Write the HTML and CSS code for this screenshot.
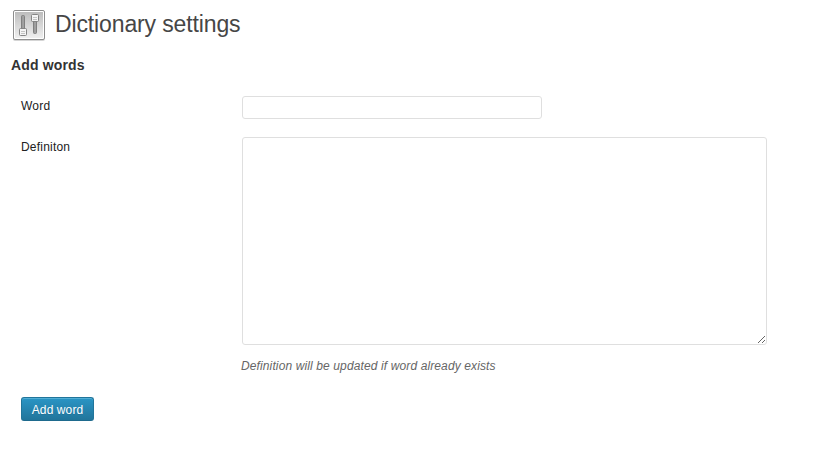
FILE: index.html
```html
<!DOCTYPE html>
<html lang="en">
<head>
<meta charset="utf-8">
<title>Dictionary settings</title>
<link rel="stylesheet" href="styles.css">
</head>
<body>
<main class="wrap">
  <header class="page-head">
    <svg class="icon" width="34" height="34" viewBox="0 0 34 34" aria-hidden="true">
      <defs>
        <linearGradient id="panel" x1="0" y1="0" x2="0" y2="1"><stop offset="0" stop-color="#bdbdbd"/><stop offset="1" stop-color="#efefef"/></linearGradient>
        <linearGradient id="track" x1="0" y1="0" x2="1" y2="0"><stop offset="0" stop-color="#858585"/><stop offset=".5" stop-color="#aaa"/><stop offset="1" stop-color="#909090"/></linearGradient>
      </defs>
      <rect x="1" y="2" width="32" height="30" rx="2" fill="#d5d5d5"/>
      <rect x="1.500" y="1.500" width="31" height="29" rx="1.500" fill="#fff" stroke="#8e8e8e"/>
      <rect x="3" y="3" width="28" height="26" fill="url(#panel)"/>
      <rect x="9.500" y="6.500" width="3" height="14" rx="1" fill="url(#track)" stroke="#808080"/>
      <rect x="21.500" y="10.500" width="3" height="14" rx="1" fill="url(#track)" stroke="#808080"/>
      <rect x="7.500" y="19.500" width="7" height="7" rx="1" fill="#f4f4f4" stroke="#858585"/>
      <path d="M9 22.500h4M9 24.500h4" stroke="#c4c4c4"/>
      <rect x="19.500" y="5.500" width="7" height="7" rx="1" fill="#f4f4f4" stroke="#858585"/>
      <path d="M21 8.500h4M21 10.500h4" stroke="#c4c4c4"/>
    </svg>
    <h1>Dictionary settings</h1>
  </header>
  <h2>Add words</h2>
  <form>
    <div class="field">
      <label for="word">Word</label>
      <input class="word" id="word" type="text">
    </div>
    <div class="field">
      <label for="definition">Definiton</label>
      <div class="control">
        <textarea id="definition"></textarea>
        <p class="hint">Definition will be updated if word already exists</p>
      </div>
    </div>
    <button class="submit" type="button">Add word</button>
  </form>
</main>
</body>
</html>
```
FILE: styles.css
```css
* { box-sizing: border-box; }
body { margin: 0; background: #fff; color: #222; font: 12px/18px "Liberation Sans", Arial, sans-serif; }
.wrap { padding: 8px 0 0 11px; }
.page-head { display: flex; height: 34px; }
.icon { display: block; flex: none; margin: 1px 9px 0 1px; }
h1 { margin: 0; font-size: 23px; line-height: 32px; font-weight: 400; color: #464646; letter-spacing: -.13px; white-space: nowrap; }
h2 { margin: 14px 0 0; font-size: 14px; line-height: 18px; font-weight: 700; color: #333; letter-spacing: .15px; }
form { padding-left: 10px; margin-top: 22px; }
.field { display: grid; grid-template-columns: 221px 525px; align-items: start; margin-bottom: 18px; }
label { padding-top: 1px; letter-spacing: .2px; }
.word, textarea { display: block; margin: 0; border: 1px solid #dfdfdf; border-radius: 3px; background: #fff; outline: 0; }
.word { width: 300px; height: 23px; }
textarea { width: 525px; height: 208px; resize: both; }
.hint { margin: 12px 0 0 -1px; font-size: 12px; font-style: italic; letter-spacing: .12px; color: #666; }
.submit { display: block; width: 73px; height: 24px; margin-top: 22px; padding: 2px 0 0; border: 1px solid #21759b; border-bottom-color: #1e6a8d; border-radius: 3px; background: linear-gradient(#2a95c5, #21759b); box-shadow: inset 0 1px 0 rgba(120,200,230,.5); color: #fff; font: 12px/20px "Liberation Sans", Arial, sans-serif; letter-spacing: .1px; text-shadow: 0 1px 0 rgba(0,0,0,.1); }
```
